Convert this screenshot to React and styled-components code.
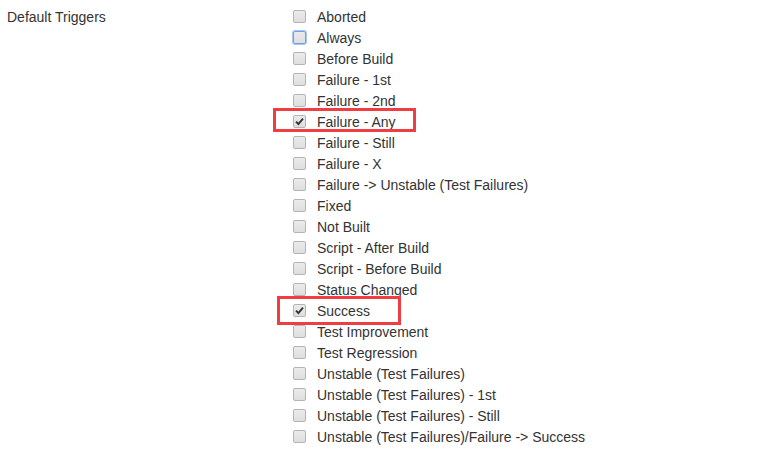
import React from "react";
import styled, { createGlobalStyle } from "styled-components";

const Global = createGlobalStyle`
  html, body { margin: 0; padding: 0; background: #fff; }
  body { font-family: "Liberation Sans", Arial, sans-serif; font-size: 14px; color: #333; }
`;

const Form = styled.div`
  display: grid;
  grid-template-columns: 293px 1fr;
  padding-top: 7px;
`;

const FieldLabel = styled.div`
  padding-left: 7px;
  line-height: 21px;
  height: 21px;
  color: #333;
`;

const List = styled.div`
  display: flex;
  flex-direction: column;
`;

const Row = styled.label`
  position: relative;
  display: flex;
  align-items: center;
  height: 21px;
  line-height: 21px;
  color: #333;
`;

const Box = styled.span`
  box-sizing: border-box;
  width: 13px;
  height: 13px;
  margin-right: 11px;
  align-self: flex-start;
  margin-top: 3px;
  border-radius: 2px;
  border: 1px solid ${(p) => (p.$focus ? "#6d9ff0" : "#b4b4b4")};
  box-shadow: ${(p) => (p.$focus ? "0 0 0 1px #a9c6f5" : "none")};
  background: linear-gradient(#ebebeb, #dedede);
  display: flex;
  align-items: center;
  justify-content: center;
  flex: none;
`;

const Highlight = styled.span`
  position: absolute;
  box-sizing: border-box;
  border: 3px solid #ef3d42;
  left: ${(p) => p.$left}px;
  top: ${(p) => p.$top}px;
  width: ${(p) => p.$width}px;
  height: ${(p) => p.$height}px;
  pointer-events: none;
`;

const Check = () => (
  <svg width="9" height="9" viewBox="0 0 9 9">
    <path d="M1 4.6 L3.4 7 L8 1.6" fill="none" stroke="#333" strokeWidth="1.9" />
  </svg>
);

const items = [
  { t: "Aborted" },
  { t: "Always", focus: true },
  { t: "Before Build" },
  { t: "Failure - 1st" },
  { t: "Failure - 2nd" },
  { t: "Failure - Any", checked: true, hl: { left: -20, top: -4, width: 143, height: 24 } },
  { t: "Failure - Still" },
  { t: "Failure - X" },
  { t: "Failure -> Unstable (Test Failures)" },
  { t: "Fixed" },
  { t: "Not Built" },
  { t: "Script - After Build" },
  { t: "Script - Before Build" },
  { t: "Status Changed" },
  { t: "Success", checked: true, hl: { left: -16, top: -5, width: 124, height: 29 } },
  { t: "Test Improvement" },
  { t: "Test Regression" },
  { t: "Unstable (Test Failures)" },
  { t: "Unstable (Test Failures) - 1st" },
  { t: "Unstable (Test Failures) - Still" },
  { t: "Unstable (Test Failures)/Failure -> Success" },
];

export default function App() {
  return (
    <>
      <Global />
      <Form>
        <FieldLabel>Default Triggers</FieldLabel>
        <List>
          {items.map((it) => (
            <Row key={it.t}>
              <Box $focus={it.focus}>{it.checked && <Check />}</Box>
              {it.t}
              {it.hl && (
                <Highlight
                  $left={it.hl.left}
                  $top={it.hl.top}
                  $width={it.hl.width}
                  $height={it.hl.height}
                />
              )}
            </Row>
          ))}
        </List>
      </Form>
    </>
  );
}
